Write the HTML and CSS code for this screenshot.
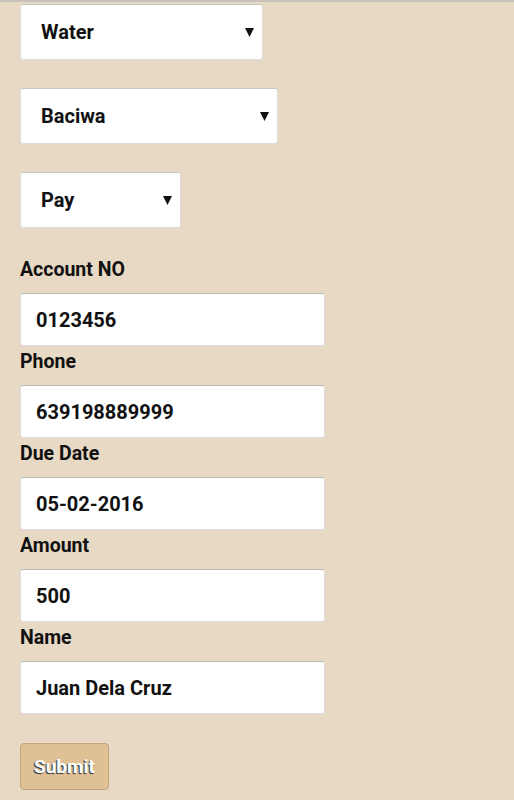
FILE: index.html
```html
<!DOCTYPE html>
<html>

<head>
    <title>Bills Payment</title>
    <link rel="stylesheet" href="styles.css">
</head>

<body>
    <form id="pay-form">
        <div class="select-row">
            <div class="select-wrap">
                <select id="category" class="select-category">
                    <option value="water">Water</option>
                    <option value="power">Power</option>
                </select>
                <svg class="arrow" width="9" height="9" viewBox="0 0 9 9"><polygon points="0,0 9,0 4.5,9" /></svg>
            </div>
        </div>
        <div class="select-row">
            <div class="select-wrap">
                <select id="biller" class="select-biller">
                    <option value="baciwa">Baciwa</option>
                </select>
                <svg class="arrow" width="9" height="9" viewBox="0 0 9 9"><polygon points="0,0 9,0 4.5,9" /></svg>
            </div>
        </div>
        <div class="select-row last">
            <div class="select-wrap">
                <select id="action" class="select-action">
                    <option value="pay">Pay</option>
                </select>
                <svg class="arrow" width="9" height="9" viewBox="0 0 9 9"><polygon points="0,0 9,0 4.5,9" /></svg>
            </div>
        </div>

        <label for="account">Account NO</label>
        <input type="text" id="account" value="0123456">

        <label for="phone">Phone</label>
        <input type="tel" id="phone" value="639198889999">

        <label for="due-date">Due Date</label>
        <input type="text" id="due-date" value="05-02-2016">

        <label for="amount">Amount</label>
        <input type="text" id="amount" value="500">

        <label for="name">Name</label>
        <input type="text" id="name" value="Juan Dela Cruz">

        <button type="button" id="submit-button">Submit</button>
    </form>
</body>

</html>
```

FILE: styles.css
```css
body {
    margin: 0;
    padding: 2px 20px 0;
    font-family: Roboto, "Liberation Sans", sans-serif;
    font-weight: bold;
    background-color: #e7d9c4;
    border-top: 2px solid #c9c2ba;
    min-height: 800px;
    box-sizing: border-box;
}

.select-row {
    margin-bottom: 28px;
}

.select-row.last {
    margin-bottom: 30px;
}

.select-wrap {
    position: relative;
    display: inline-block;
    vertical-align: top;
}

select {
    -webkit-appearance: none;
    appearance: none;
    display: block;
    height: 56px;
    padding: 0 20px;
    font-family: Roboto, sans-serif;
    font-size: 20px;
    font-weight: bold;
    color: #111;
    background-color: white;
    border: 1px solid #ddd;
    border-top-color: #c8c8c8;
    border-radius: 3px;
}

.select-category {
    width: 243px;
}

.select-biller {
    width: 258px;
}

.select-action {
    width: 161px;
}

.arrow {
    position: absolute;
    right: 9px;
    top: 24px;
    fill: #111;
    pointer-events: none;
}

label {
    display: block;
    font-size: 19.5px;
    line-height: 23px;
    color: #111;
    margin: 4px 0 12px;
}

input[type="text"],
input[type="tel"] {
    display: block;
    width: 305px;
    height: 53px;
    box-sizing: border-box;
    padding: 0 15px;
    font-family: Roboto, sans-serif;
    font-size: 20px;
    font-weight: bold;
    color: #111;
    background-color: white;
    border: 1px solid #ddd;
    border-top-color: #bbb;
    border-radius: 3px;
}

button {
    display: block;
    margin-top: 29px;
    width: 89px;
    height: 47px;
    padding: 0;
    font-family: Roboto, sans-serif;
    font-size: 19px;
    font-weight: bold;
    color: white;
    text-shadow: -1px 1px 1px #333;
    background-color: #e0c196;
    border: 1px solid #c2a47c;
    border-radius: 4px;
    cursor: pointer;
}
```
